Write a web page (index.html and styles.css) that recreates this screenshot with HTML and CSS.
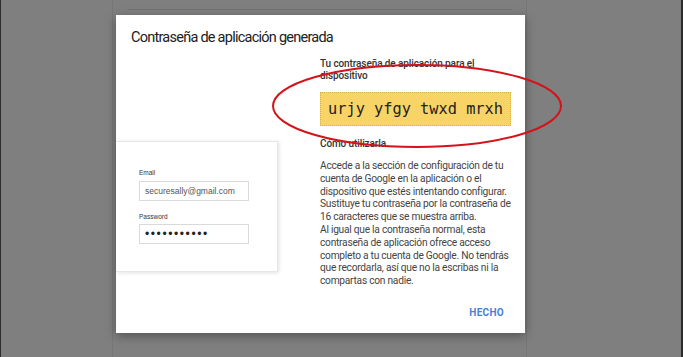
FILE: index.html
```html
<!DOCTYPE html>
<html lang="es">
<head>
  <meta charset="UTF-8" />
  <meta name="viewport" content="width=device-width, initial-scale=1.0"/>
  <title>Contraseña de aplicación generada</title>
  <link rel="stylesheet" href="styles.css">
</head>
<body>
  <div class="page">
    <div class="page-card">
      <div class="page-rule"></div>
    </div>
  </div>

  <div class="modal">
    <h1 class="modal-title">Contraseña de aplicación generada</h1>
    <div class="modal-body">
      <div class="preview">
        <div class="login-card">
          <div class="field-label">Email</div>
          <div class="field">securesally@gmail.com</div>
          <div class="field-label gap">Password</div>
          <div class="field dots">•••••••••••</div>
        </div>
      </div>
      <div class="info">
        <div class="info-head">Tu contraseña de aplicación para el dispositivo</div>
        <div class="code">urjy yfgy twxd mrxh</div>
        <div class="info-head how">Cómo utilizarla</div>
        <p class="info-text">
          Accede a la sección de configuración de tu cuenta de Google en la aplicación o el dispositivo que estés intentando configurar. Sustituye tu contraseña por la contraseña de 16 caracteres que se muestra arriba.<br>
          Al igual que la contraseña normal, esta contraseña de aplicación ofrece acceso completo a tu cuenta de Google. No tendrás que recordarla, así que no la escribas ni la compartas con nadie.
        </p>
      </div>
    </div>
    <div class="modal-actions">
      <span class="done-btn">HECHO</span>
    </div>
  </div>

  <svg class="mark" width="683" height="357" viewBox="0 0 683 357">
    <ellipse cx="417" cy="106" rx="144" ry="41" fill="none" stroke="#d4121a" stroke-width="2"/>
  </svg>
</body>
</html>
```

FILE: styles.css
```css
html, body {
  margin: 0;
  padding: 0;
}
body {
  width: 683px;
  height: 357px;
  overflow: hidden;
  background: #7f7f7f;
  font-family: Roboto, "Noto Sans", Arial, sans-serif;
  position: relative;
  box-sizing: border-box;
  border-left: 1px solid #2b2b2b;
  border-right: 2px solid #2b2b2b;
}
.page {
  height: 100%;
  display: flex;
  justify-content: flex-start;
  padding-left: 111px;
}
.page-card {
  width: 415px;
  height: 100%;
  border-left: 1px solid #777;
  border-right: 1px solid #777;
  box-sizing: border-box;
  padding: 9px 14px 0;
}
.page-rule {
  height: 1px;
  background: #737373;
}
.modal {
  position: absolute;
  left: 115px;
  top: 15px;
  width: 409px;
  height: 318px;
  background: #fff;
  box-shadow: 0 3px 10px rgba(0, 0, 0, 0.35);
  display: flex;
  flex-direction: column;
}
.modal-title {
  margin: 0;
  padding: 13px 0 0 15px;
  height: 20px;
  line-height: 20px;
  font-size: 14.5px;
  font-weight: 400;
  letter-spacing: -0.75px;
  color: #212121;
}
.modal-body {
  display: grid;
  grid-template-columns: 204px 1fr;
  margin-top: 10px;
}
.preview {
  padding-top: 83px;
}
.login-card {
  width: 162px;
  height: 131px;
  box-sizing: border-box;
  border: 1px solid #e6e6e6;
  border-left: none;
  box-shadow: 1px 1px 4px rgba(0, 0, 0, 0.12);
  padding: 27px 0 0 23px;
  font-family: "Liberation Sans", Arial, sans-serif;
}
.field-label {
  font-size: 6.5px;
  line-height: 8px;
  color: #333;
}
.field-label.gap {
  margin-top: 12px;
}
.field {
  width: 110px;
  height: 20px;
  box-sizing: border-box;
  margin-top: 4px;
  border: 1px solid #dadada;
  padding-left: 5px;
  font-size: 8.5px;
  line-height: 18px;
  color: #555;
}
.field.dots {
  margin-top: 3px;
  font-size: 12px;
  letter-spacing: 1.6px;
  color: #222;
}
.info {
  padding-right: 10px;
}
.info-head {
  font-size: 10px;
  font-weight: 500;
  line-height: 12px;
  letter-spacing: -0.1px;
  color: #333;
  width: 170px;
}
.code {
  margin-top: 10px;
  width: 191px;
  height: 34px;
  box-sizing: border-box;
  background: #f8d466;
  border: 1px dotted #d6b24c;
  padding-left: 7px;
  font-family: "DejaVu Sans Mono", "Liberation Mono", monospace;
  font-size: 15.3px;
  line-height: 32px;
  color: #222;
}
.info-head.how {
  margin-top: 12px;
}
.info-text {
  margin: 10px 0 0;
  font-size: 10.2px;
  line-height: 12.8px;
  letter-spacing: -0.25px;
  color: #444;
}
.modal-actions {
  margin-top: auto;
  display: flex;
  justify-content: flex-end;
  padding: 0 21px 14px 0;
}
.done-btn {
  font-size: 10px;
  font-weight: 700;
  color: #4a7fd9;
  letter-spacing: 0.3px;
  line-height: 12px;
}
.mark {
  position: absolute;
  left: -1px;
  top: 0;
  pointer-events: none;
}
```
